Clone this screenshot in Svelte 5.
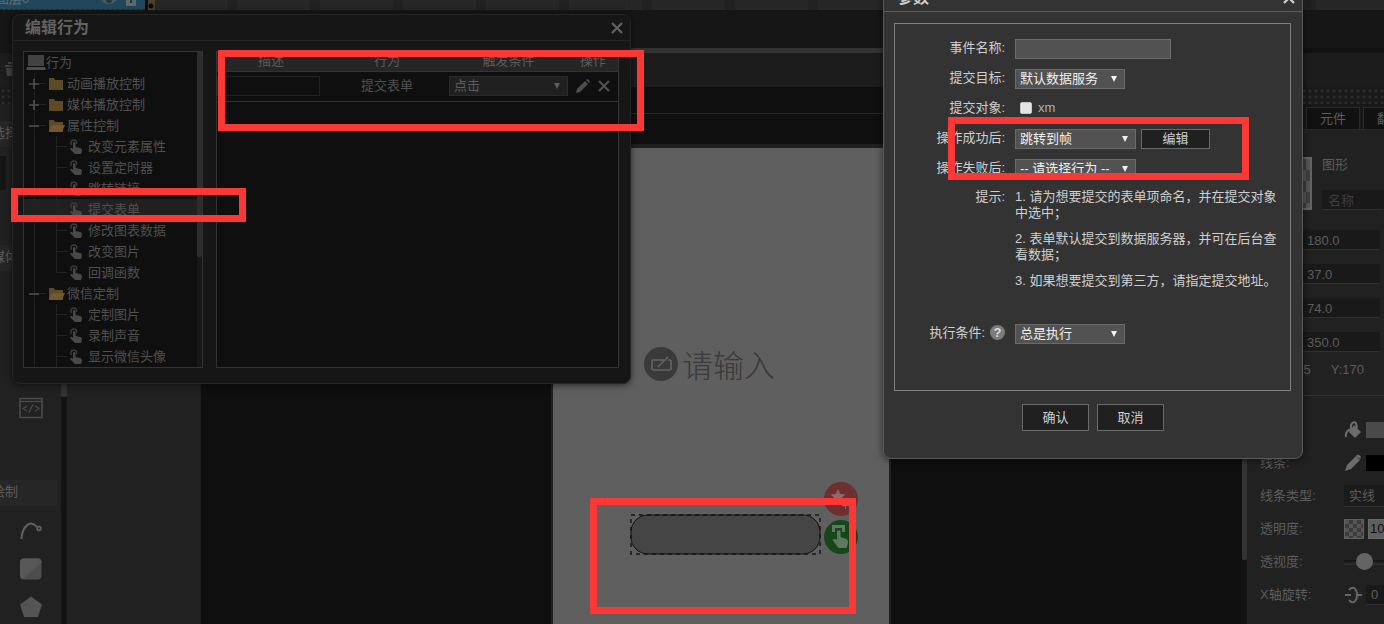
<script>
  const tree = [
    { kind: 'root', label: '行为' },
    { kind: 'closed', label: '动画播放控制' },
    { kind: 'closed', label: '媒体播放控制' },
    { kind: 'open', label: '属性控制' },
    { kind: 'leaf', label: '改变元素属性' },
    { kind: 'leaf', label: '设置定时器' },
    { kind: 'leaf', label: '跳转链接' },
    { kind: 'leaf', label: '提交表单', selected: true },
    { kind: 'leaf', label: '修改图表数据' },
    { kind: 'leaf', label: '改变图片' },
    { kind: 'leaf', label: '回调函数', last: true },
    { kind: 'open', label: '微信定制' },
    { kind: 'leaf', label: '定制图片' },
    { kind: 'leaf', label: '录制声音' },
    { kind: 'leaf', label: '显示微信头像' }
  ];
  const sizes = [
    { name: '宽', value: '180.0' },
    { name: '高', value: '37.0' },
    { name: '左', value: '74.0' },
    { name: '上', value: '350.0' }
  ];
  const marks = [
    { left: 218, top: 50, width: 426, height: 81 },
    { left: 11, top: 188, width: 235, height: 34 },
    { left: 948, top: 117, width: 301, height: 63 },
    { left: 590, top: 498, width: 266, height: 116 }
  ];
</script>

{#snippet cross()}
  <svg width="12" height="12" viewBox="0 0 12 12" aria-hidden="true"><path d="M1 1l10 10M11 1L1 11" stroke="currentColor" stroke-width="2.2" fill="none" /></svg>
{/snippet}

{#snippet pick(id, label, value, size)}
  <span class="pick {size}">
    <select {id} aria-label={label}><option>{value}</option></select>
    <svg width="8" height="8" viewBox="0 0 8 8" aria-hidden="true"><path d="M1 1h6L4 7z" fill="currentColor" /></svg>
  </span>
{/snippet}

<div class="editor">
  <div class="timeline">
    <div class="layer">
      <span class="layer-name">图层0</span>
      <svg width="16" height="10" viewBox="0 0 16 10" aria-hidden="true"><path d="M0 0q8 8 16 0z" fill="#4a5a63" /><circle cx="8" cy="0" r="3" fill="#23333d" /></svg>
      <svg width="12" height="10" viewBox="0 0 12 10" aria-hidden="true"><path d="M1 0h10v6H1z" fill="#5b6a72" /><path d="M5 0h2v3H5z" fill="#26333b" /></svg>
    </div>
    <div class="frame"></div>
    <div class="ruler"></div>
  </div>
  <div class="menu-bar"></div>
  <div class="split"></div>
  <div class="tool-bar">
    <svg width="12" height="16" viewBox="0 0 12 16" aria-hidden="true"><path d="M1 4h11v2H1zM2 7h10v8H3zM4 1h7v2H4z" fill="#444" /></svg>
  </div>

  <div class="work">
    <aside class="left">
      <div class="dots"></div>
      <h3 class="first">选择</h3>
      <div class="well"></div>
      <h3 class="second">媒体</h3>
      <div class="tool code">
        <svg width="26" height="22" viewBox="0 0 26 22" fill="none" stroke="#4a4a4a" aria-hidden="true"><path d="M2 1.5h22v19H2z" stroke-width="1.6" /><path d="M2 4.5h22" stroke-width="1.4" /><path d="M9 9l-4 2.500 4 2.500M17 9l4 2.500-4 2.500M15 7.500l-4 8" stroke-width="1.3" /></svg>
      </div>
      <h3 class="third">绘制</h3>
      <div class="tool">
        <svg width="24" height="24" viewBox="0 0 24 24" fill="none" stroke="#616161" aria-hidden="true"><path d="M2.500 20C3 7 12 0 18 8" stroke-width="2" /><circle cx="20" cy="9.500" r="1.800" stroke-width="1.8" /></svg>
      </div>
      <div class="tool">
        <svg width="24" height="24" viewBox="0 0 24 24" aria-hidden="true"><rect x="1" y="1.500" width="21.500" height="21" rx="4" fill="#4d4d4d" /><path d="M5 1.500h14q3.500 0 3.500 4L4 22q-3-.5-3-4V5.500q0-4 4-4z" fill="#575757" /></svg>
      </div>
      <div class="tool">
        <svg width="24" height="24" viewBox="0 0 24 24" aria-hidden="true"><path d="M12 1.500l11 8-4 12.500H5L1 9.500z" fill="#545454" /></svg>
      </div>
    </aside>
    <div class="track left-track"><div></div></div>
    <div class="pages"></div>

    <main class="stage">
      <div class="stage-head"></div>
      <div class="stage-rule"></div>
      <div class="phone">
        <svg class="edit-mark" width="34" height="34" viewBox="0 0 34 34" fill="none" aria-hidden="true"><circle cx="17" cy="17" r="17" fill="#3a3a3a" /><path d="M20 13H9q-1 0-1 1v8q0 1 1 1h17q1 0 1-1v-8q0-1-1-1h-2M14 20l10-10" stroke="#646464" stroke-width="1.6" /></svg>
        <span class="hint">请输入</span>
        <div class="shape"><svg width="100%" height="100%" aria-hidden="true"><rect x="1" y="1" width="189" height="39" rx="17" fill="#454545" stroke="#111" /><rect x="1" y="1" width="189" height="39" fill="none" stroke="#171717" stroke-width="1.500" stroke-dasharray="4 4" /></svg></div>
        <svg class="star-mark" width="34" height="34" viewBox="0 0 34 34" aria-hidden="true"><circle cx="17" cy="17" r="17" fill="#6e2f31" /><path d="M14 7l2.200 5 5.300.5-4 3.600 1.200 5.400-4.700-2.800-4.700 2.800 1.200-5.400-4-3.600 5.300-.5z" fill="#906b6c" /><path d="M21.500 20v7M18 23.500h7" stroke="#906b6c" /></svg>
        <svg class="tap-mark" width="34" height="34" viewBox="0 0 34 34" fill="#5f7861" aria-hidden="true"><circle cx="17" cy="17" r="17" fill="#15471a" /><path d="M8 5h13v7h-3V8h-7v4H8z" /><path d="M13 11q2-1.500 3.500 0v6l6 2q2 1 1.500 4l-1.500 5h-8l-6-8q1-2 4.500 0z" /></svg>
      </div>
    </main>

    <div class="track right-track"><div></div></div>
    <aside class="right">
      <div class="dots"></div>
      <div class="tabs"><button>元件</button><button>翻页</button></div>
      <div class="object">
        <div class="preview"></div>
        <div class="object-name"><span>图形</span><input aria-label="名称" placeholder="名称" /></div>
      </div>
      <div class="sizes">
        {#each sizes as item}
          <input aria-label={item.name} value={item.value} />
        {/each}
      </div>
      <div class="coords"><span>X:265</span><span>Y:170</span></div>
      <div class="prop">
        <span>填充:</span>
        <svg width="18" height="18" viewBox="0 0 18 18" aria-hidden="true"><path d="M10 4l7 7-6 6-6-6z" fill="#6c6c6c" /><path d="M7 8V4q2-4 5-2l1 5M2 16q-1-6 5-8" fill="none" stroke="#6c6c6c" stroke-width="2" /></svg>
        <i class="swatch grey"></i>
      </div>
      <div class="prop">
        <span>线条:</span>
        <svg width="18" height="18" viewBox="0 0 18 18" aria-hidden="true"><path d="M1 17l2-6L12 2l4 4-9 9zM13 1q2-1 4 2l-1 2-4-3z" fill="#6c6c6c" /></svg>
        <i class="swatch black"></i>
      </div>
      <div class="prop"><label for="line-type">线条类型:</label><select id="line-type"><option>实线</option></select></div>
      <div class="prop"><label for="alpha">透明度:</label><i class="checker"></i><input id="alpha" class="alpha" value="100" /></div>
      <div class="prop"><label for="depth">透视度:</label><input id="depth" type="range" value="5" /></div>
      <div class="prop">
        <label for="rotate-x">X轴旋转:</label>
        <svg width="18" height="18" viewBox="0 0 18 18" fill="none" stroke="#666" stroke-width="2" aria-hidden="true"><path d="M1 9h6M14 9h4M5 4q2-3 5-2 3 2 3 7t-3 7q-3 1-5-2" /></svg>
        <input id="rotate-x" class="angle" value="0" />
      </div>
    </aside>
  </div>

  <section class="window behavior" aria-label="编辑行为">
    <header><h2>编辑行为</h2><button aria-label="关闭">{@render cross()}</button></header>
    <div class="panes">
      <div class="tree">
        <ul>
          {#each tree as node}
            <li class={node.kind} class:selected={node.selected} class:last={node.last}>
              {#if node.kind === 'root'}
                <svg width="20" height="17" viewBox="0 0 20 17" aria-hidden="true"><path d="M2 1h16v11H2z" fill="#424242" /><path d="M1 13h18l1 3H0z" fill="#4c4c4c" /></svg>
              {:else if node.kind === 'leaf'}
                <svg width="14" height="16" viewBox="0 0 14 16" aria-hidden="true"><path d="M2.500 6q-2-4 2-5 4 0 3 4" fill="none" stroke="#3a3a3a" stroke-width="1.500" /><path d="M4 4q1-2 2.500 0v4l4.500 1q2 0 2 3l-1 3H6l-5-5q1-2 3 0z" fill="#484848" /></svg>
              {:else}
                <svg class="toggle" width="12" height="12" viewBox="0 0 12 12" aria-hidden="true"><path d={node.kind === 'open' ? 'M1 6h10' : 'M1 6h10M6 1v10'} stroke="#4f4f4f" stroke-width="1.600" /></svg>
                <svg class="folder" width="18" height="14" viewBox="0 0 18 14" aria-hidden="true"><path d="M1 1h5l1 2h8v10H1z" fill="#5f4a26" />{#if node.kind === 'open'}<path d="M4 6h13l-3 7H1z" fill="#705830" />{/if}</svg>
              {/if}
              <span>{node.label}</span>
            </li>
          {/each}
        </ul>
        <div class="tree-track"><div></div></div>
      </div>
      <div class="actions">
        <table>
          <colgroup><col class="c1" /><col class="c2" /><col class="c3" /><col class="c4" /></colgroup>
          <thead><tr><th>描述</th><th>行为</th><th>触发条件</th><th>操作</th></tr></thead>
          <tbody>
            <tr>
              <td><input aria-label="描述" /></td>
              <td>提交表单</td>
              <td>{@render pick('trigger', '触发条件', '点击', 'full')}</td>
              <td>
                <div class="ops">
                  <button aria-label="编辑"><svg width="14" height="14" viewBox="0 0 14 14" aria-hidden="true"><path d="M0 14l1-4 8-8 3 3-8 8zM10 1l1-1q2 0 3 3l-1 1z" fill="#4d4d4d" /></svg></button>
                  <button aria-label="删除">{@render cross()}</button>
                </div>
              </td>
            </tr>
          </tbody>
        </table>
      </div>
    </div>
  </section>

  <section class="window params" aria-label="参数">
    <header><h2>参数</h2><button aria-label="关闭">{@render cross()}</button></header>
    <form>
      <label for="event-name">事件名称:</label>
      <div><input id="event-name" class="text" /></div>
      <label for="target">提交目标:</label>
      <div>{@render pick('target', '提交目标', '默认数据服务', 'short')}</div>
      <span class="caption">提交对象:</span>
      <div><label class="check"><input type="checkbox" />xm</label></div>
      <label for="success">操作成功后:</label>
      <div class="pair">{@render pick('success', '操作成功后', '跳转到帧', 'medium')}<button type="button" class="edit">编辑</button></div>
      <label for="failure">操作失败后:</label>
      <div>{@render pick('failure', '操作失败后', '-- 请选择行为 --', 'medium')}</div>
      <span class="caption tip-label">提示:</span>
      <div class="tips">
        <p>1. 请为想要提交的表单项命名，并在提交对象中选中；</p>
        <p>2. 表单默认提交到数据服务器，并可在后台查看数据；</p>
        <p>3. 如果想要提交到第三方，请指定提交地址。</p>
      </div>
      <label for="condition" class="condition">执行条件:<b>?</b></label>
      <div class="condition">{@render pick('condition', '执行条件', '总是执行', 'short')}</div>
    </form>
    <footer><button>确认</button><button>取消</button></footer>
  </section>

  {#each marks as m}
    <div class="mark" style="left:{m.left}px;top:{m.top}px;width:{m.width}px;height:{m.height}px"></div>
  {/each}
</div>

<style>
  :global(body) { background: #0f0f0f; }
  .editor, .editor * { box-sizing: border-box; }
  .editor {
    position: relative; display: flex; flex-direction: column; height: 100vh; overflow: hidden;
    background: #0f0f0f; color: #5c5c5c;
    font-family: "Liberation Sans", "Noto Sans CJK SC", sans-serif; font-size: 13px; line-height: 16px;
  }
  input, select, button { font: inherit; color: inherit; margin: 0; outline: 0; border-radius: 0; }
  select { appearance: none; }
  button { padding: 0; background: none; border: 0; }
  h2, h3, p, ul { margin: 0; padding: 0; font-weight: normal; }
  svg { display: block; flex: none; }

  .timeline { display: flex; flex: none; height: 10px; overflow: hidden; }
  .layer { display: flex; align-items: flex-start; width: 145px; padding-right: 8px; gap: 8px; background: #22475b; border-bottom: 1px dashed #162c38; }
  .layer-name { flex: 1; margin-top: -9px; text-indent: -4px; color: #5f7079; }
  .frame { width: 7px; margin-left: 3px; background: radial-gradient(circle at 3px 6px, #080808 2px, #4a4128 3px); }
  .ruler { flex: 1; background: repeating-linear-gradient(90deg, #0000 0 72px, #212121 72px 82px, #0000 82px 83px), repeating-linear-gradient(90deg, #262626 0 7px, #292929 7px 8px); }
  .menu-bar { flex: none; height: 38px; background: #161616; }
  .split { flex: none; height: 5px; background: linear-gradient(90deg, #161616 12px, #333 12px calc(100% - 90px), #121212 0); }
  .tool-bar { flex: none; height: 34px; padding: 8px 4px; background: #1c1c1c; }
  .work { display: flex; flex: 1; min-height: 0; }
  .left, .right { overflow: hidden; background: #212121; flex: none; }
  .dots { height: 17px; background: radial-gradient(circle at 3px 4px, #2c2c2c 1px, transparent 2px) 0 0 / 6px 6px #1a1a1a; }
  .left { width: 61px; }
  .left h3 { height: 26px; margin-right: 4px; text-indent: -8px; font-size: 13px; line-height: 24px; background: #262626; }
  .left .first { margin-top: 17px; }
  .left .second { margin-top: 55px; }
  .left .third { margin: 53px 4px 6px 0; }
  .well { width: 6px; height: 34px; margin-top: 9px; background: #151515; }
  .tool { display: flex; align-items: center; justify-content: center; height: 38px; }
  .code { margin-top: 118px; }
  .track { width: 5px; flex: none; background: #121212; }
  .track div { background: #333; border-radius: 0 0 2px 2px; }
  .left-track { width: 6px; }
  .left-track div { height: 310px; }
  .right-track div { height: 473px; }
  .pages { width: 134px; flex: none; background: #212121; border-right: 1px solid #1b1b1b; }

  .stage { display: flex; flex-direction: column; flex: 1; min-width: 0; background: #0f0f0f; }
  .stage-head { flex: none; height: 27px; border-bottom: 1px solid #292929; }
  .stage-rule { flex: none; height: 34px; border-bottom: 4px solid #202020; }
  .phone { position: relative; flex: 1; width: 336px; margin-right: 1px; align-self: center; background: #5f5f5f; box-shadow: 0 0 0 2px #202020; }
  .edit-mark { position: absolute; left: 91px; top: 199px; }
  .hint { position: absolute; left: 129px; top: 199px; font-size: 31px; line-height: 40px; font-weight: 300; color: #3a3a3a; }
  .shape { position: absolute; left: 77px; top: 366px; width: 191px; height: 41px; }
  .star-mark { position: absolute; left: 271px; top: 334px; }
  .tap-mark { position: absolute; left: 271px; top: 372px; }

  .right { width: 137px; }
  .tabs { display: flex; gap: 3px; height: 26px; padding: 3px 0 0 59px; background: #181818; border-bottom: 1px solid #2a2a2a; }
  .tabs button { flex: none; width: 54px; background: #111; border: 1px solid #2a2a2a; border-bottom: 0; }
  .object { display: flex; gap: 10px; padding: 27px 0 20px 13px; }
  .preview { width: 52px; height: 53px; border: 2px solid #646464; background: repeating-conic-gradient(#3f3f3f 0 25%, #555 0 50%) 0 0 / 22px 22px; }
  .object-name { display: flex; flex-direction: column; justify-content: space-between; flex: 1; min-width: 0; }
  .right input { min-width: 0; width: 100%; padding: 0 5px; background: #191919; border: 1px solid #191919; border-bottom-color: #303030; }
  .object-name input { height: 20px; }
  .object-name input::placeholder { color: #3e3e3e; opacity: 1; }
  .sizes { display: flex; flex-direction: column; gap: 14px; padding: 0 4px 0 54px; }
  .sizes input { height: 20px; }
  .coords { display: flex; justify-content: flex-end; gap: 20px; height: 44px; padding: 10px 20px 0 0; margin-bottom: 17px; border-bottom: 1px solid #303030; }
  .prop { display: grid; grid-template-columns: 76px auto 1fr; column-gap: 4px; align-items: center; height: 33px; padding-left: 13px; }
  .prop > :nth-child(2) { margin-left: 4px; }
  .swatch { height: 16px; }
  .grey { background: #4a4a4a; }
  .black { background: #000; }
  .prop select { width: 60px; height: 22px; padding: 0 4px; background: #1b1b1b; border: 1px solid #1b1b1b; border-bottom-color: #303030; }
  .checker { width: 20px; height: 20px; border: 1px solid #606060; background: repeating-conic-gradient(#3c3c3c 0 25%, #555 0 50%) 0 0 / 8px 8px; }
  .right .alpha { width: 40px; height: 20px; padding: 0 1px; background: #5f5f5f; color: #111; border-color: #6a6a6a; }
  .right .angle { width: 40px; height: 20px; padding: 0 4px; }
  .right input[type='range'] { appearance: none; width: 120px; height: 18px; padding: 0 0 0 7px; border: 0; background: linear-gradient(#121212, #303030) 0 7px / 100% 5px no-repeat; }
  .right input[type='range']::-webkit-slider-thumb { appearance: none; width: 17px; height: 17px; border-radius: 50%; background: #646464; }

  .window { position: absolute; border: 1px solid; border-radius: 8px; box-shadow: 0 1px 7px #0009; }
  .window header { display: flex; align-items: center; justify-content: space-between; height: 26px; border-bottom: 1px solid; }
  .window h2 { font-size: 16px; line-height: 20px; font-weight: bold; }
  .behavior { left: 12px; top: 14px; width: 619px; padding-bottom: 15px; background: #161616; border-color: #242424; }
  .behavior header { padding: 0 7px 0 12px; border-color: #242424; color: #626262; }
  .panes { display: flex; gap: 13px; padding: 10px 11px 0 10px; }
  .tree { display: flex; width: 180px; border: 1px solid #333; background: #0f0f0f; }
  .tree ul { flex: 1; list-style: none; }
  .tree li { display: flex; align-items: center; height: 21px; white-space: nowrap; color: #505050; }
  .tree .root { padding-left: 2px; }
  .closed, .open { padding-left: 4px; background: linear-gradient(90deg, #242424, #242424) 15px 10px / 7px 1px no-repeat, linear-gradient(#202020, #202020) 10px 0 / 1px 100% no-repeat; }
  .folder { margin: 0 1px 0 8px; }
  .leaf { padding-left: 45px; gap: 5px; background: linear-gradient(#222, #222) 10px 0 / 1px 100% no-repeat, linear-gradient(#222, #222) 32px 0 / 1px 100% no-repeat, linear-gradient(#242424, #242424) 33px 10px / 10px 1px no-repeat; }
  .leaf.last { background-size: 1px 100%, 1px 50%, 10px 1px; }
  .tree .selected { background-color: #202020; }
  .tree-track { width: 5px; background: #171717; }
  .tree-track div { width: 5px; height: 205px; background: #2d2d2d; border-radius: 0 0 2px 2px; }
  .actions { flex: 1; min-width: 0; border: 1px solid #333; background: #0f0f0f; }
  table { width: 100%; table-layout: fixed; border-collapse: collapse; }
  .c1 { width: 108px; }
  .c2 { width: 124px; }
  .c3 { width: 119px; }
  th, td { padding: 0; text-align: center; font-weight: normal; border-bottom: 1px solid #333; }
  th { height: 19px; background: #262626; }
  td { height: 30px; color: #505050; }
  td input { display: block; width: 103px; height: 20px; background: #0f0f0f; border: 1px solid #222; }
  .ops { display: flex; align-items: center; justify-content: center; gap: 8px; }

  .pick { position: relative; display: inline-flex; height: 20px; vertical-align: top; }
  .pick select { width: 100%; padding: 0 4px; background: #525252; border: 1px solid #6a6a6a; color: #f0f0f0; line-height: 18px; }
  .pick svg { position: absolute; right: 7px; top: 6px; color: #f0f0f0; pointer-events: none; }
  .full { display: flex; width: 100%; }
  .full select { background: #202020; border-color: #2b2b2b; color: #5c5c5c; }
  .full svg { color: #5c5c5c; }
  .short { width: 110px; }
  .medium { width: 121px; }

  .params { left: 883px; top: -16px; width: 420px; padding-bottom: 27px; background: #333; border-color: #5a5a5a; color: #cfcfcf; }
  .params header { height: 27px; padding: 0 7px 0 13px; border-color: #5a5a5a; }
  .params form { display: grid; grid-template-columns: 110px 1fr; grid-auto-rows: minmax(20px, auto); column-gap: 10px; row-gap: 10px; margin: 11px 11px 0 10px; padding: 15px 10px 46px 0; border: 1px solid #808080; }
  form > label, .caption { line-height: 18px; text-align: right; }
  .tip-label { line-height: 16px; }
  .text { display: block; width: 156px; height: 20px; background: #525252; border: 1px solid #6a6a6a; }
  .check { display: flex; align-items: center; gap: 6px; height: 18px; padding-left: 5px; color: #b0b0b0; }
  .check input { appearance: none; width: 12px; height: 12px; border: 1px solid #c4c4c4; border-radius: 2px; background: #e4e4e4; }
  .pair { display: flex; gap: 5px; height: 20px; }
  .edit { height: 20px; width: 69px; background: #202020; border: 1px solid #6a6a6a; }
  .tips { display: flex; flex-direction: column; gap: 10px; }
  .condition { margin-top: 25px; }
  .condition b { display: inline-block; width: 15px; height: 15px; margin-left: 5px; border-radius: 50%; background: #7b7b7b; color: #ddd; line-height: 15px; text-align: center; }
  footer { display: flex; justify-content: center; gap: 8px; margin-top: 13px; }
  footer button { width: 67px; height: 27px; background: #202020; border: 1px solid #6a6a6a; }
  .mark { position: absolute; border: 7px solid #fb3836; pointer-events: none; }
</style>
